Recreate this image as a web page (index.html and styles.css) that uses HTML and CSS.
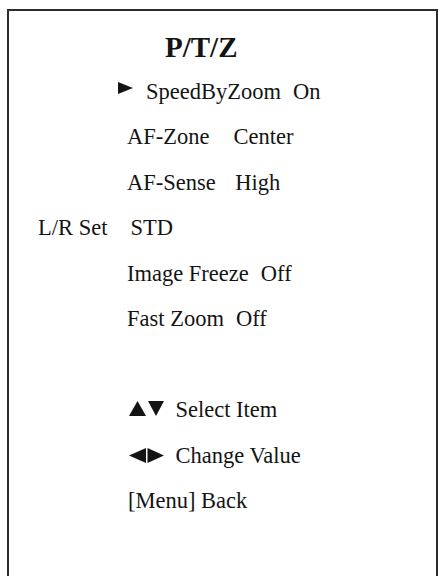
FILE: index.html
```html
<!DOCTYPE html>
<html lang="en">
<head>
<meta charset="utf-8">
<title>P/T/Z</title>
<link rel="stylesheet" href="styles.css">
</head>
<body>
<div class="screen">
  <h1 class="title">P/T/Z</h1>
  <ul class="menu">
    <li class="row row-selected">
      <svg class="cursor" width="15" height="12" viewBox="0 0 15 12" aria-hidden="true"><polygon points="0,0 15,6 0,12"/></svg><span class="label">SpeedByZoom</span><span class="value gap-12">On</span>
    </li>
    <li class="row"><span class="label">AF-Zone</span><span class="value gap-24">Center</span></li>
    <li class="row"><span class="label">AF-Sense</span><span class="value gap-20">High</span></li>
    <li class="row row-outdent"><span class="label">L/R Set</span><span class="value gap-23">STD</span></li>
    <li class="row"><span class="label">Image Freeze</span><span class="value gap-12">Off</span></li>
    <li class="row"><span class="label">Fast Zoom</span><span class="value gap-12">Off</span></li>
  </ul>
  <ul class="help">
    <li class="row row-help">
      <svg class="keys keys-ud" width="35" height="15" viewBox="0 0 35 15" aria-hidden="true"><polygon points="0,15 8.5,0 17,15"/><polygon points="19,0 35,0 27,15"/></svg><span class="label">Select Item</span>
    </li>
    <li class="row row-help">
      <svg class="keys keys-lr" width="35" height="15" viewBox="0 0 35 15" aria-hidden="true"><polygon points="0,7.5 17,0 17,15"/><polygon points="18.5,0 35,7.5 18.5,15"/></svg><span class="label">Change Value</span>
    </li>
    <li class="row row-help row-back"><span class="label">[Menu] Back</span></li>
  </ul>
</div>
</body>
</html>
```

FILE: styles.css
```css
html, body {
  margin: 0;
  padding: 0;
  background: #ffffff;
  overflow: hidden;
}

body {
  font-family: "Liberation Serif", "Times New Roman", serif;
  color: #141414;
}

.screen {
  margin: 9px 2px 0 7px;
  border: 2px solid #2c2c2c;
  min-height: 640px;
  padding-top: 13.5px;
  box-sizing: border-box;
}

.title {
  margin: 0;
  padding-left: 156px;
  font-size: 29px;
  font-weight: bold;
  line-height: 44px;
}

.menu,
.help {
  list-style: none;
  margin: 0;
  padding: 0;
}

.help {
  margin-top: 45.5px;
}

.row {
  font-size: 22.5px;
  line-height: 45.5px;
  height: 45.5px;
  padding-left: 118px;
  white-space: nowrap;
}

.row-selected {
  padding-left: 109px;
}

.row-outdent {
  padding-left: 29px;
}

.row-help {
  padding-left: 120px;
}

.row-back {
  padding-left: 119px;
}

.cursor {
  vertical-align: 5px;
  margin-right: 13px;
  fill: #141414;
}

.keys {
  fill: #141414;
  margin-right: 11.5px;
}

.keys-ud {
  vertical-align: 1px;
}

.keys-lr {
  vertical-align: -0.5px;
}

.value {
  display: inline-block;
}

.gap-12 { margin-left: 12px; }
.gap-20 { margin-left: 19.5px; }
.gap-23 { margin-left: 23px; }
.gap-24 { margin-left: 24px; }
```
